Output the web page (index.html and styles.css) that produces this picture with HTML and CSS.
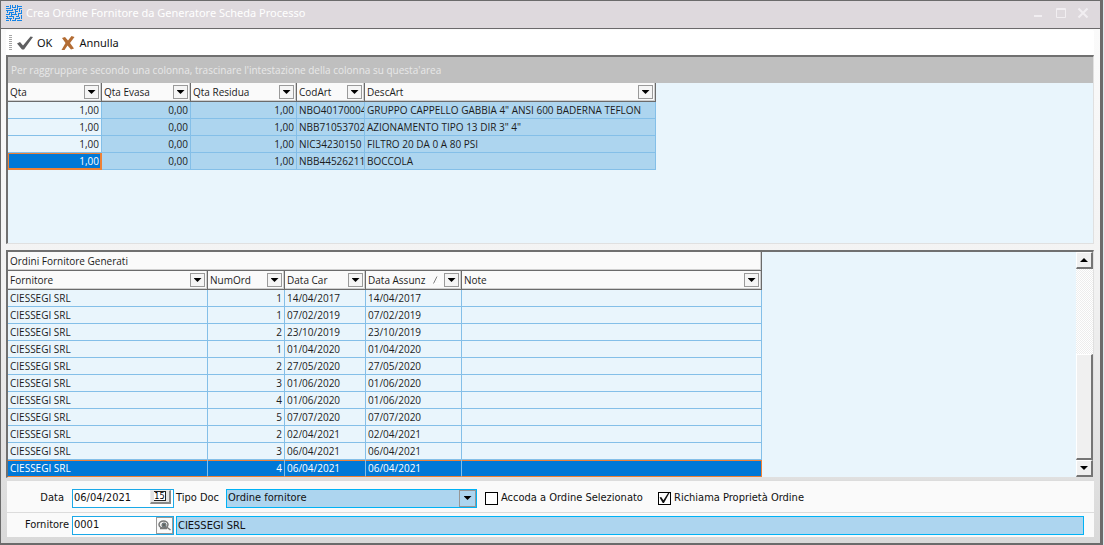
FILE: index.html
```html
<!DOCTYPE html>
<html lang="it">
<head>
<meta charset="utf-8">
<title>Crea Ordine Fornitore da Generatore Scheda Processo</title>
<link rel="stylesheet" href="styles.css">
</head>
<body>
<div class="window">
  <header class="titlebar">
    <svg class="logo" viewBox="0 0 16 16" fill="none" stroke="#1583e6" stroke-width="1" shape-rendering="crispEdges" aria-hidden="true">
      <path d="M0 1.500h3M4.500 0v4M0 3.500h5M6.500 0v2M6 2.500h4M9.500 0v3M11.500 0v4M8 4.500h4M11 1.500h5M13.500 3.500h2.500M13.500 3v4M0 5.500h7M6.500 4v2M1.500 5v3M3.500 7.500h4.500M9.500 4v4M9 6.500h3M11.500 8.500h4.500M15.500 5v4M0 9.500h4M3.500 7v3M5.500 8v4M5.500 9.500h5M9.500 8v2M12.500 8v3M10 11.500h3M0 11.500h2M1.500 11v3M3 11.500h5M7.500 11v3M9.500 13.500h4M13.500 12v2M15.500 10v4M0 13.500h6M4.500 13v3M6 15.500h4M9.500 13v3M11 15.500h5M0 15.500h3"/>
    </svg>
    <h1 class="title">Crea Ordine Fornitore da Generatore Scheda Processo</h1>
    <div class="controls">
      <button class="control" type="button" aria-label="Riduci"><svg viewBox="0 0 12 12"><path d="M1 8h8v2H1z" fill="#f1eef1"/></svg></button>
      <button class="control" type="button" aria-label="Ingrandisci"><svg viewBox="0 0 12 12"><path d="M1.500 1.500h9v9h-9zM1 2.500h10" fill="none" stroke="#f1eef1"/></svg></button>
      <button class="control" type="button" aria-label="Chiudi"><svg viewBox="0 0 12 12"><path d="M1.500 1.500l9 9M10.500 1.500l-9 9" stroke="#f1eef1" stroke-width="2"/></svg></button>
    </div>
  </header>

  <main class="content">
    <div class="toolbar">
      <span class="grip"></span>
      <button class="tool" type="button">
        <svg class="tool-icon" viewBox="0 0 16 16" aria-hidden="true"><path d="M0 8.500l3-1.500 3 3.500L13.500 1.500l2.500.5L7 14.500H5z" fill="#5f5f61"/></svg>OK
      </button>
      <button class="tool" type="button">
        <svg class="tool-icon small" viewBox="0 0 14 14" aria-hidden="true"><path d="M1 2l3-1 3 3.500L10.500 0l3 1L9 7l4 5.500-3 1-3.500-4L3.500 14H.5L4.500 7z" fill="#b36c33"/></svg>Annulla
      </button>
    </div>

    <section class="grid lines-grid">
      <p class="group-band">Per raggruppare secondo una colonna, trascinare l'intestazione della colonna su questa'area</p>
      <table class="table">
        <colgroup><col class="w94"><col class="w89"><col class="w106"><col class="w68"><col class="w291"></colgroup>
        <thead><tr>
          <th><div class="head">Qta<button class="filter" type="button" aria-label="Filtra Qta"></button></div></th>
          <th><div class="head">Qta Evasa<button class="filter" type="button" aria-label="Filtra Qta Evasa"></button></div></th>
          <th><div class="head">Qta Residua<button class="filter" type="button" aria-label="Filtra Qta Residua"></button></div></th>
          <th><div class="head">CodArt<button class="filter" type="button" aria-label="Filtra CodArt"></button></div></th>
          <th><div class="head">DescArt<button class="filter" type="button" aria-label="Filtra DescArt"></button></div></th>
        </tr></thead>
        <tbody class="locked">
          <tr><td class="num edit">1,00</td><td class="num">0,00</td><td class="num">1,00</td><td>NBO40170004</td><td>GRUPPO CAPPELLO GABBIA 4" ANSI 600 BADERNA TEFLON</td></tr>
          <tr><td class="num edit">1,00</td><td class="num">0,00</td><td class="num">1,00</td><td>NBB71053702</td><td>AZIONAMENTO TIPO 13 DIR 3" 4"</td></tr>
          <tr><td class="num edit">1,00</td><td class="num">0,00</td><td class="num">1,00</td><td>NIC34230150</td><td>FILTRO 20 DA 0 A 80 PSI</td></tr>
          <tr><td class="num edit current">1,00</td><td class="num">0,00</td><td class="num">1,00</td><td>NBB44526211</td><td>BOCCOLA</td></tr>
        </tbody>
      </table>
    </section>

    <section class="grid orders-grid">
      <div class="orders-body">
        <table class="table">
          <colgroup><col class="w200"><col class="w77"><col class="w81"><col class="w96"><col class="w300"></colgroup>
          <thead>
            <tr><th colspan="5"><div class="head">Ordini Fornitore Generati</div></th></tr>
            <tr>
              <th><div class="head">Fornitore<button class="filter" type="button" aria-label="Filtra Fornitore"></button></div></th>
              <th><div class="head">NumOrd<button class="filter" type="button" aria-label="Filtra NumOrd"></button></div></th>
              <th><div class="head">Data Car<button class="filter" type="button" aria-label="Filtra Data Car"></button></div></th>
              <th><div class="head">Data Assunz<svg class="sort" viewBox="0 0 8 8" aria-hidden="true"><path d="M4 .5L7.500 7.500H.5" fill="none" stroke="#fff"/><path d="M.5 7.500L4 .5" stroke="#808080"/></svg><button class="filter" type="button" aria-label="Filtra Data Assunz"></button></div></th>
              <th><div class="head">Note<button class="filter" type="button" aria-label="Filtra Note"></button></div></th>
            </tr>
          </thead>
          <tbody>
            <tr><td>CIESSEGI SRL</td><td class="num">1</td><td>14/04/2017</td><td>14/04/2017</td><td></td></tr>
            <tr><td>CIESSEGI SRL</td><td class="num">1</td><td>07/02/2019</td><td>07/02/2019</td><td></td></tr>
            <tr><td>CIESSEGI SRL</td><td class="num">2</td><td>23/10/2019</td><td>23/10/2019</td><td></td></tr>
            <tr><td>CIESSEGI SRL</td><td class="num">1</td><td>01/04/2020</td><td>01/04/2020</td><td></td></tr>
            <tr><td>CIESSEGI SRL</td><td class="num">2</td><td>27/05/2020</td><td>27/05/2020</td><td></td></tr>
            <tr><td>CIESSEGI SRL</td><td class="num">3</td><td>01/06/2020</td><td>01/06/2020</td><td></td></tr>
            <tr><td>CIESSEGI SRL</td><td class="num">4</td><td>01/06/2020</td><td>01/06/2020</td><td></td></tr>
            <tr><td>CIESSEGI SRL</td><td class="num">5</td><td>07/07/2020</td><td>07/07/2020</td><td></td></tr>
            <tr><td>CIESSEGI SRL</td><td class="num">2</td><td>02/04/2021</td><td>02/04/2021</td><td></td></tr>
            <tr><td>CIESSEGI SRL</td><td class="num">3</td><td>06/04/2021</td><td>06/04/2021</td><td></td></tr>
            <tr class="selected"><td>CIESSEGI SRL</td><td class="num">4</td><td>06/04/2021</td><td>06/04/2021</td><td></td></tr>
          </tbody>
        </table>
      </div>
      <div class="scrollbar">
        <button class="scroll-button up" type="button" aria-label="Scorri in alto"></button>
        <div class="track"></div>
        <div class="thumb"></div>
        <button class="scroll-button down" type="button" aria-label="Scorri in basso"></button>
      </div>
    </section>

    <form class="form">
      <div class="form-row first">
        <label class="label narrow" for="data">Data</label>
        <div class="field">
          <input id="data" class="input" type="text" value="06/04/2021">
          <button class="calendar" type="button" aria-label="Calendario"><span class="day">15</span></button>
        </div>
        <label class="label tipo" for="tipo">Tipo Doc</label>
        <div class="combo">
          <select id="tipo" class="select"><option>Ordine fornitore</option></select>
          <span class="combo-arrow"></span>
        </div>
        <label class="check wide"><input class="box" type="checkbox">Accoda a Ordine Selezionato</label>
        <label class="check"><input class="box" type="checkbox" checked>Richiama Proprietà Ordine</label>
      </div>
      <div class="form-row second">
        <label class="label" for="fornitore">Fornitore</label>
        <div class="field">
          <input id="fornitore" class="input" type="text" value="0001">
          <button class="search" type="button" aria-label="Cerca">
            <svg viewBox="0 0 15 15" aria-hidden="true"><ellipse cx="6.500" cy="6.500" rx="4.500" ry="3.500" fill="#eee" stroke="#777" stroke-width="1.500"/><circle cx="7" cy="7" r="2" fill="#8fbfd8" stroke="#555"/><circle cx="7" cy="7" r="1" fill="#543"/><path d="M9.500 9l4 3M3 10.500h7" stroke="#777" stroke-width="1.500"/></svg>
          </button>
        </div>
        <input class="readonly" type="text" value="CIESSEGI SRL" readonly aria-label="Ragione sociale">
      </div>
    </form>
  </main>
</div>
</body>
</html>
```
FILE: styles.css
```css
* { box-sizing: border-box; }

body {
  margin: 0;
  background: #dfe8ee;
  color: #111;
  font: 11px/16px "Noto Sans", "Open Sans", sans-serif;
}

button, input, select {
  margin: 0;
  padding: 0;
  border: 0;
  border-radius: 0;
  color: inherit;
  font: inherit;
}

.window {
  display: flex;
  flex-direction: column;
  min-height: 100vh;
  margin-right: 1px;
  border: solid #6b6b6b;
  border-width: 1px 3px 2px 1px;
}

.titlebar {
  display: flex;
  align-items: center;
  gap: 4px;
  height: 28px;
  padding: 0 11px 3px 5px;
  border-bottom: 1px solid #6b696b;
  background: #ded9dd;
}

.logo { width: 16px; height: 16px; }

.title {
  flex: 1;
  margin: 0;
  color: #fff;
  font-size: 11px;
  font-weight: 400;
}

.controls { display: flex; gap: 10px; }
.control { width: 12px; height: 12px; background: none; }
.control svg { display: block; }

.content {
  flex: 1;
  display: flex;
  flex-direction: column;
  padding: 1px 6px 6px 5px;
  background: linear-gradient(#fafafa 0%, #f2f2f2 50%, #d9d9d9 100%);
}

.toolbar {
  display: flex;
  align-items: center;
  gap: 9px;
  height: 25px;
  padding: 1px 0 0 3px;
  border-radius: 2px;
  background: #fff;
}

.grip {
  width: 3px;
  height: 16px;
  background: repeating-linear-gradient(#a5a5a5 0 1px, #fff 1px 2px);
}

.tool {
  display: flex;
  align-items: center;
  gap: 4px;
  background: none;
}

.tool:nth-child(2) { margin-left: -4px; }
.tool-icon { width: 16px; height: 16px; }
.tool-icon.small { width: 14px; height: 14px; }

.grid {
  border: solid;
  border-width: 2px 1px 1px 2px;
  border-color: #707070 #e0e0e0 #e0e0e0 #707070;
  background: #e9f5fc;
  color: #1c1c1c;
  font: 10px/16px "Open Sans", "Noto Sans", sans-serif;
}

.lines-grid { flex: 188 0 auto; margin-bottom: 6px; }
.orders-grid { flex: 0 0 auto; display: flex; }
.orders-body { flex: 1; }

.group-band {
  height: 26px;
  margin: 0;
  padding: 5px 3px;
  background: #bfbfbf;
  color: #e8e8e8;
}

.table {
  table-layout: fixed;
  width: 1px;
  border-collapse: separate;
  border-spacing: 0;
}

.w68 { width: 68px; }
.w77 { width: 77px; }
.w81 { width: 81px; }
.w89 { width: 89px; }
.w94 { width: 94px; }
.w96 { width: 96px; }
.w106 { width: 106px; }
.w200 { width: 200px; }
.w291 { width: 291px; }
.w300 { width: 300px; }

th {
  height: 19px;
  padding: 0;
  border: solid #6b6b6b;
  border-width: 0 1px 1px 0;
  background: #fafafa;
  box-shadow: inset -1px -1px #cfcfcf;
  font-weight: 400;
  text-align: left;
}

.head {
  display: flex;
  align-items: center;
  height: 18px;
  padding: 0 2px;
  white-space: nowrap;
}

.filter {
  display: flex;
  align-items: center;
  justify-content: center;
  width: 15px;
  height: 14px;
  margin-left: auto;
  border: 1px solid #9a9a9a;
  background: #f5f5f5;
}

.filter::after, .combo-arrow::after, .scroll-button::after {
  content: "";
  width: 8px;
  height: 4px;
  background: #000;
  clip-path: polygon(0 0, 100% 0, 50% 100%);
}

.sort { width: 8px; height: 8px; margin-left: 8px; }

td {
  height: 17px;
  padding: 0 2px;
  border: solid #84bfe8;
  border-width: 0 1px 1px 0;
  overflow: hidden;
  white-space: nowrap;
}

.num { text-align: right; }
.locked td { background: #add5ef; }
.locked .edit { background: #e9f5fc; }

.locked .current, .selected td { background: #0078d7; color: #fff; }
.locked .current { box-shadow: inset 0 0 0 1px #ee8136; border-color: #ee8136; }
.selected td { box-shadow: inset 0 1px #ee8136; border-bottom-color: #ee8136; }
.selected td:last-child { border-right-color: #ee8136; }

.scrollbar {
  display: flex;
  flex-direction: column;
  width: 17px;
}

.scroll-button {
  display: flex;
  align-items: center;
  justify-content: center;
  height: 17px;
}

.scroll-button, .thumb {
  border: solid;
  border-width: 1px 2px 2px 1px;
  border-color: #fff #757575 #757575 #fff;
  background: #f0f0f0;
}

.up::after { transform: rotate(180deg); }
.track { flex: 86; background: repeating-conic-gradient(#ededed 0 25%, #fff 0 50%) 0 0 / 2px 2px; }
.thumb { flex: 104; }

.form { display: flex; flex-direction: column; margin: 2px 0 0 1px; }

.form-row {
  display: flex;
  align-items: center;
  background: #fafafa;
  border-top: 1px solid #dcdcdc;
  font: 11px/16px "DejaVu Sans Condensed", "Noto Sans", sans-serif;
}

.first { height: 32px; padding-top: 3px; }
.second { height: 25px; padding-right: 10px; }

.label { width: 65px; padding-right: 3px; text-align: right; white-space: nowrap; }
.narrow { padding-right: 8px; }
.tipo { width: 52px; padding: 0 0 0 2px; text-align: left; }

.field {
  display: flex;
  width: 102px;
  height: 19px;
  border: 1px solid #1ba9e8;
  background: #fff;
}

.input { flex: 1; min-width: 0; padding-left: 1px; background: none; outline: 0; }

.calendar {
  display: flex;
  align-items: center;
  justify-content: center;
  width: 21px;
  height: 14px;
  margin-right: 2px;
  border: solid;
  border-width: 1px 2px 2px 1px;
  border-color: #eee #888 #888 #eee;
  background: #e4e4e4;
}

.day {
  width: 12px;
  height: 10px;
  border: solid #222;
  border-width: 1px 1px 1px 0;
  background: #fff;
  color: #000;
  font: 9px/8px "DejaVu Sans Condensed", sans-serif;
  text-align: center;
}

.search { width: 17px; border: 1px solid #999; background: #fafafa; }
.search svg { display: block; }

.combo {
  position: relative;
  width: 251px;
  height: 19px;
  border: 1px solid #00b2f5;
  background: #add5ef;
}

.select { width: 100%; height: 100%; padding-left: 1px; background: none; appearance: none; }

.combo-arrow {
  position: absolute;
  top: 0;
  right: 0;
  bottom: 0;
  display: flex;
  align-items: center;
  justify-content: center;
  width: 17px;
  border: 1px solid #969696;
  pointer-events: none;
}

.check { display: flex; align-items: center; gap: 3px; margin-left: 8px; white-space: nowrap; }
.wide { width: 165px; }

.box {
  display: grid;
  width: 13px;
  height: 13px;
  border: 1px solid #000;
  background: #fff;
  appearance: none;
}

.box:checked::after {
  content: "";
  background: #111;
  clip-path: polygon(5% 45%, 20% 42%, 40% 70%, 82% 5%, 95% 5%, 45% 95%, 34% 95%);
}

.readonly {
  flex: 1;
  height: 19px;
  margin-left: 2px;
  padding-left: 1px;
  border: 1px solid #00b2f5;
  background: #add5ef;
  outline: 0;
}
```
